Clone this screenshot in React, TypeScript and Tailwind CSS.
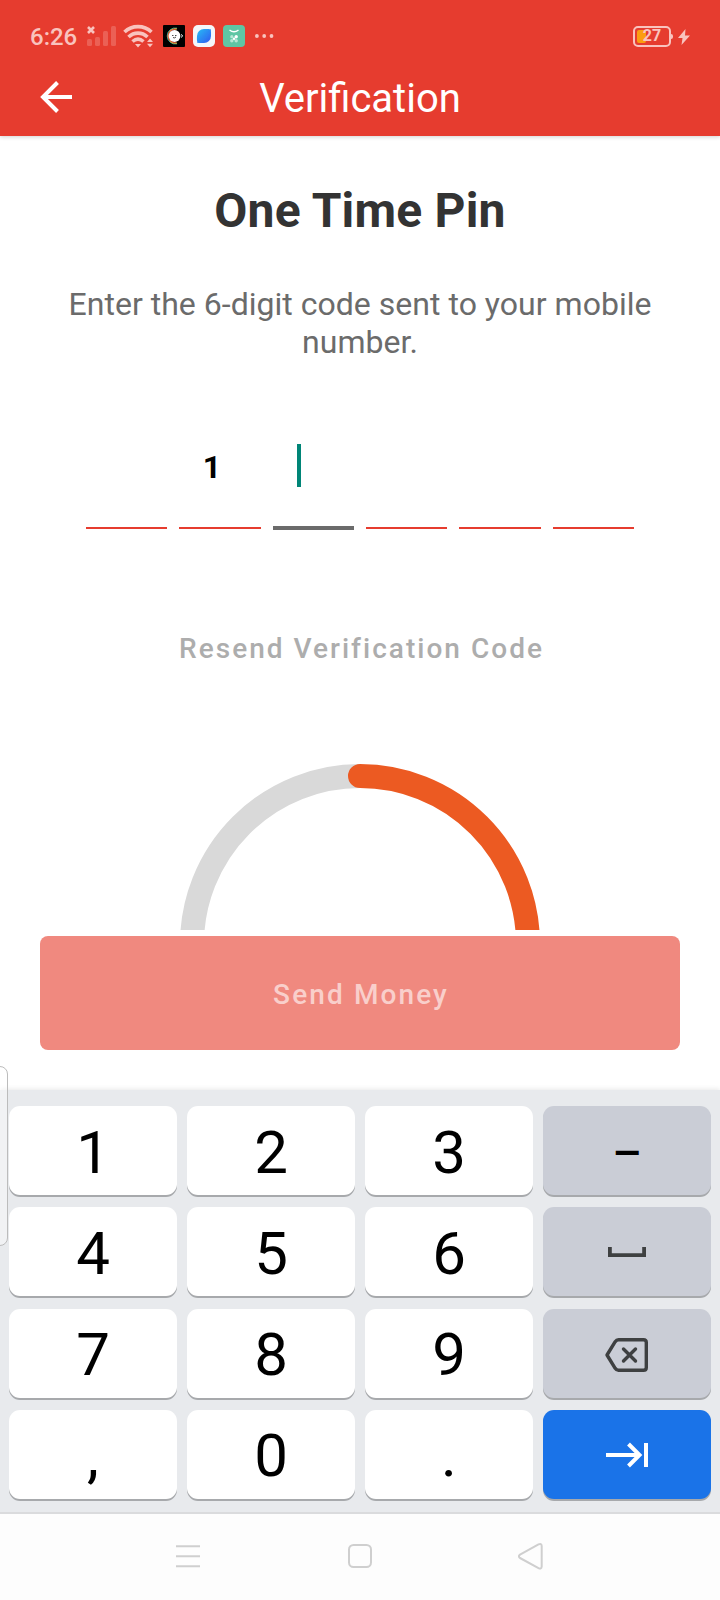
import React from "react";

const digits = ["", "1", "", "", "", ""];

function StatusBar() {
  return (
    <div className="flex h-[72px] items-center pl-[30px] pr-[30px] text-[#f9c3be]">
      <span className="mt-px w-[56px] text-[24px] leading-7 font-medium">6:26</span>
      <svg className="mt-[-1px] h-[24px] w-[32px]" viewBox="0 0 32 24" fill="none">
        <g fill="#eb6055">
          <rect x="1" y="15" width="5" height="7" rx="1.5" />
          <rect x="9" y="13" width="5" height="9" rx="1.5" />
          <rect x="17" y="7" width="5" height="15" rx="1.5" />
          <rect x="25" y="2" width="5" height="20" rx="1.5" />
        </g>
        <path d="M2 3l6 6M8 3L2 9" stroke="#f9c3be" strokeWidth="2.6" />
      </svg>
      <svg className="ml-[5px] h-[24px] w-[32px]" viewBox="0 0 32 24" fill="none" stroke="currentColor" strokeWidth="3.600">
        <path d="M1.500 8C9 0.800 21 0.800 28.500 8M5.500 13C11 7.800 19 7.800 24.500 13M9.500 17.500C13 14.500 17 14.500 20.500 17.500" />
        <path d="M12 20h6l-3 3.500zM24 18l3-3.500 3 3.500zM24 19.800h6L27 23.300z" fill="currentColor" stroke="none" />
      </svg>
      <svg className="ml-[8px] h-[22px] w-[22px]" viewBox="0 0 22 22">
        <rect width="22" height="22" rx="1" fill="#000" />
        <path d="M14 3.200A8 8 0 1 0 14 18.800" fill="none" stroke="#37b0a0" strokeWidth="1" />
        <path d="M14 4A7.200 7.200 0 1 0 14 18" fill="none" stroke="#e8b43a" strokeWidth="1.200" />
        <path d="M13 4.800A6.400 6.400 0 1 0 13 17.200" fill="none" stroke="#db4538" strokeWidth="1" />
        <circle cx="11.500" cy="11" r="5.900" fill="#fff" />
        <path d="M15 11h2M18 9.500l1.500 1-1 2" stroke="#fff" fill="none" />
        <path d="M9 10.500h1.500M12 10.500h1.500M10 12.500q1.500 1 3-0.500" stroke="#222" strokeWidth="0.800" fill="none" />
      </svg>
      <svg className="ml-[8px] h-[22px] w-[22px]" viewBox="0 0 22 22">
        <defs>
          <linearGradient id="leaf" x1="0" y1="0" x2="1" y2="1">
            <stop offset="0" stopColor="#27bdf5" />
            <stop offset="1" stopColor="#3157ef" />
          </linearGradient>
        </defs>
        <rect width="22" height="22" rx="5" fill="#f4f6fa" />
        <path
          d="M11 4C13 3.900 16 3.800 17.500 4.500C18.200 6 18.100 9 18 11A7 7 0 0 1 11 18C9 18.100 6 18.200 4.500 17.500C3.800 16 3.900 13 4 11A7 7 0 0 1 11 4Z"
          fill="url(#leaf)"
        />
        <path d="M4.500 17.500C9 16 14 12 17.500 4.500" fill="none" stroke="#2b87f5" strokeWidth="1" />
      </svg>
      <svg className="ml-[8px] h-[22px] w-[22px]" viewBox="0 0 22 22">
        <rect width="22" height="22" rx="4" fill="#5fc6a4" />
        <path d="M6.500 5q4.500 3.500 9 0" stroke="#fff" strokeWidth="1.400" fill="none" />
        <g fill="#b7e6d5">
          <circle cx="8.800" cy="11.700" r="1.600" />
          <circle cx="13.200" cy="11.700" r="1.700" fill="#fff" />
          <circle cx="8.800" cy="15.700" r="1.700" />
          <circle cx="13.200" cy="15.700" r="1.700" />
          <circle cx="11" cy="13.700" r="1.300" fill="#fff" />
        </g>
      </svg>
      <svg className="ml-[10px] h-[6px] w-[20px]" viewBox="0 0 20 6" fill="currentColor">
        <circle cx="1.900" cy="3" r="1.900" />
        <circle cx="9.200" cy="3" r="1.900" />
        <circle cx="16.500" cy="3" r="1.900" />
      </svg>
      <div className="ml-auto flex items-center">
        <div className="relative flex h-[21px] w-[38px] items-center justify-center rounded-[5px] border-2 border-current">
          <span className="absolute left-[2px] top-[2px] h-[13px] w-[9px] rounded-[2px] bg-[#fb9d10]" />
          <span className="relative -mt-px text-[16px] leading-4 font-bold">27</span>
        </div>
        <span className="h-[5px] w-[2px] rounded-r bg-current" />
        <svg className="ml-[5px] mt-[1px] h-[16px] w-[12px]" viewBox="0 0 12 16" fill="currentColor">
          <path d="M7.500 0L0 9H4.500L3.500 16L12 6.500H7z" />
        </svg>
      </div>
    </div>
  );
}

function Key({ children, className = "bg-white" }: { children: React.ReactNode; className?: string }) {
  return (
    <div
      className={
        "flex h-[89px] items-center justify-center rounded-[11px] text-[60px] leading-none text-black shadow-[0_2px_0_#a7a9ac] " +
        className
      }
    >
      {children}
    </div>
  );
}

function Digit({ children }: { children: string }) {
  return (
    <Key>
      <span className="mt-[4px]">{children}</span>
    </Key>
  );
}

function Keyboard() {
  return (
    <div className="h-[424px] border-b-2 border-[#dadbdd] bg-[#e8eaed] px-[9px] pt-[16px] shadow-[0_-1px_5px_rgba(0,0,0,0.09)]">
      <div className="grid grid-cols-4 gap-x-[10px] gap-y-[12.300px]">
        <Digit>1</Digit>
        <Digit>2</Digit>
        <Digit>3</Digit>
        <Key className="bg-[#cacdd6]">
          <span className="mt-[4px] text-[46px] font-medium">–</span>
        </Key>
        <Digit>4</Digit>
        <Digit>5</Digit>
        <Digit>6</Digit>
        <Key className="bg-[#cacdd6]">
          <svg className="h-[10px] w-[38px]" viewBox="0 0 38 10" fill="none" stroke="#3e4041" strokeWidth="3.800">
            <path d="M1.900 0v8.100h34.200V0" />
          </svg>
        </Key>
        <Digit>7</Digit>
        <Digit>8</Digit>
        <Digit>9</Digit>
        <Key className="bg-[#cacdd6]">
          <svg
            className="mt-[3px] h-[34px] w-[44px]"
            viewBox="0 0 44 34"
            fill="none"
            stroke="#3e4041"
            strokeWidth="3.400"
            strokeLinecap="round"
            strokeLinejoin="round"
          >
            <path d="M13.500 1.700H38.500Q41.300 1.700 41.300 4.500V29.500Q41.300 32.300 38.500 32.300H13.500Q11.500 32.300 10.200 30.300L2 17L10.200 3.700Q11.500 1.700 13.500 1.700Z" />
            <path d="M18.500 11l12 12M30.500 11l-12 12" />
          </svg>
        </Key>
        <Digit>,</Digit>
        <Digit>0</Digit>
        <Digit>.</Digit>
        <Key className="bg-[#1a73e8]">
          <svg className="mt-px h-[26px] w-[44px]" viewBox="0 0 44 26" fill="none" stroke="#fff" strokeWidth="4">
            <path d="M1 13H35M23.500 2L34.500 13L23.500 24M41 1V25" />
          </svg>
        </Key>
      </div>
    </div>
  );
}

function NavBar() {
  return (
    <div className="grid h-[86px] grid-cols-[1fr_auto_1fr] bg-[#fdfdfd] pl-[176px] pr-[176px] pt-[28px]">
      <svg className="h-[30px] w-[24px]" viewBox="0 0 24 30" stroke="#cfcfcf" strokeWidth="2">
        <path d="M0 4.300h24M0 14.300h24M0 24.300h24" />
      </svg>
      <svg className="h-[30px] w-[24px]" viewBox="0 0 24 30" fill="none" stroke="#cfcfcf" strokeWidth="2">
        <rect x="1" y="3" width="22" height="22" rx="4.500" />
      </svg>
      <svg className="h-[30px] w-[26px] justify-self-end" viewBox="0 0 26 30" fill="none" stroke="#cfcfcf" strokeWidth="2" strokeLinejoin="round">
        <path d="M20.500 2.400Q23.500 0.900 23.700 4V24.500Q23.500 27.600 20.500 26.100L2 16Q-0.200 14.300 2 12.600Z" />
      </svg>
    </div>
  );
}

export default function App() {
  return (
    <div className="relative flex h-[1600px] w-[720px] flex-col overflow-hidden bg-white font-[Roboto,sans-serif]">
      <header className="h-[136px] shrink-0 bg-[#e63c2f] shadow-[0_1px_4px_rgba(0,0,0,0.18)]">
        <StatusBar />
        <div className="grid h-[52px] grid-cols-[1fr_auto_1fr] items-center">
          <svg className="mb-[4px] ml-[40px] h-[32px] w-[32px]" viewBox="0 0 32 32" fill="none" stroke="#fff" strokeWidth="4">
            <path d="M32 16H3M17.500 1.500L3 16L17.500 30.500" />
          </svg>
          <h1 className="text-[40px] leading-[54px] text-white">Verification</h1>
        </div>
      </header>

      <main className="flex h-[954px] shrink-0 flex-col items-center">
        <h2 className="mt-[47px] text-[48px] leading-[56px] font-bold tracking-[0.200px] text-[#333333]">One Time Pin</h2>
        <p className="mt-[47px] w-[640px] text-center text-[32px] leading-[37.500px] tracking-[0.020px] text-[#6b6b6b]">
          Enter the 6-digit code sent to your mobile number.
        </p>
        <div className="mt-[83px] grid w-[548px] grid-cols-6 gap-x-[12px]">
          {digits.map((digit, i) => (
            <div key={i} className="flex h-[86px] flex-col">
              <div className="flex h-[43px] items-center justify-center pr-[16px] text-[32px] font-bold text-black">
                {i === 2 ? <span className="mr-[13px] h-[43px] w-[4px] bg-[#008577]" /> : <span className="mt-[2px]">{digit}</span>}
              </div>
              <div
                className={
                  i === 2 ? "mt-[39px] h-[4px] shrink-0 bg-[#6b6b6b]" : "mt-[40px] h-[2px] shrink-0 bg-[#e63c2f]"
                }
              />
            </div>
          ))}
        </div>
        <button className="mt-[99px] pl-[3px] text-[28px] leading-[40px] font-medium tracking-[2.020px] text-[#adadad]">
          Resend Verification Code
        </button>
        <svg className="mt-[93px] h-[168px] w-[360px] shrink-0" viewBox="0 0 360 168" fill="none" strokeWidth="24">
          <path d="M12 182A168 168 0 0 1 180 14" stroke="#d9d9d9" />
          <path d="M180 14A168 168 0 0 1 348 182" stroke="#ec5a22" strokeLinecap="round" />
        </svg>
        <button className="mt-[6px] h-[114px] w-[640px] shrink-0 rounded-[8px] bg-[#f0897f] pt-[3px] pl-[2px] text-[28px] font-medium tracking-[2.100px] text-[#f9cfcb]">
          Send Money
        </button>
      </main>

      <Keyboard />
      <NavBar />
      <div className="absolute -left-[10px] top-[1066px] h-[180px] w-[18px] rounded-[8px] border border-[#bcbcbc] bg-white/40" />
    </div>
  );
}
